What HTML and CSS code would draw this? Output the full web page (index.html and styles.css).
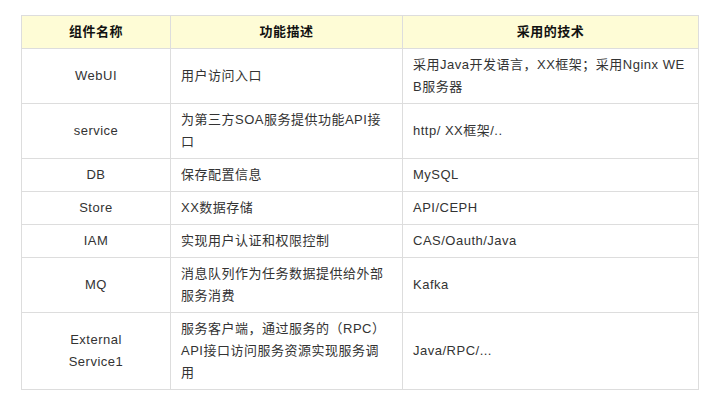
FILE: index.html
```html
<!DOCTYPE html>
<html lang="zh-CN">
<head>
<meta charset="utf-8">
<link rel="stylesheet" href="styles.css">
</head>
<body>
<div class="page">
<table class="spec">
<colgroup>
<col class="c1"><col class="c2"><col class="c3">
</colgroup>
<thead>
<tr><th>组件名称</th><th>功能描述</th><th>采用的技术</th></tr>
</thead>
<tbody>
<tr><td class="name">WebUI</td><td>用户访问入口</td><td>采用Java开发语言，XX框架；采用Nginx WEB服务器</td></tr>
<tr><td class="name">service</td><td>为第三方SOA服务提供功能API接口</td><td>http/ XX框架/..</td></tr>
<tr><td class="name">DB</td><td>保存配置信息</td><td>MySQL</td></tr>
<tr><td class="name">Store</td><td>XX数据存储</td><td>API/CEPH</td></tr>
<tr><td class="name">IAM</td><td>实现用户认证和权限控制</td><td>CAS/Oauth/Java</td></tr>
<tr><td class="name">MQ</td><td>消息队列作为任务数据提供给外部服务消费</td><td>Kafka</td></tr>
<tr><td class="name">External<br>Service1</td><td>服务客户端，通过服务的（RPC）API接口访问服务资源实现服务调用</td><td>Java/RPC/...</td></tr>
</tbody>
</table>
</div>
</body>
</html>
```
FILE: styles.css
```css
html, body {
  margin: 0;
  padding: 0;
  background: #ffffff;
}
.page {
  padding: 15px 0 0 21px;
}
.spec {
  border-collapse: collapse;
  table-layout: fixed;
  width: 677px;
  font-family: "Liberation Sans", Arial, "Noto Sans CJK SC", sans-serif;
  font-size: 13px;
  line-height: 22px;
  letter-spacing: 0.5px;
  color: #333333;
}
.c1 { width: 149px; }
.c2 { width: 232px; }
.c3 { width: 296px; }
.spec th, .spec td {
  border: 1px solid #dddddd;
  padding: 5px 10px;
  vertical-align: middle;
  word-break: break-all;
  text-align: left;
}
.spec th {
  background: #fefcd6;
  color: #111111;
  font-weight: bold;
  text-align: center;
}
.spec td.name {
  text-align: center;
}
```
